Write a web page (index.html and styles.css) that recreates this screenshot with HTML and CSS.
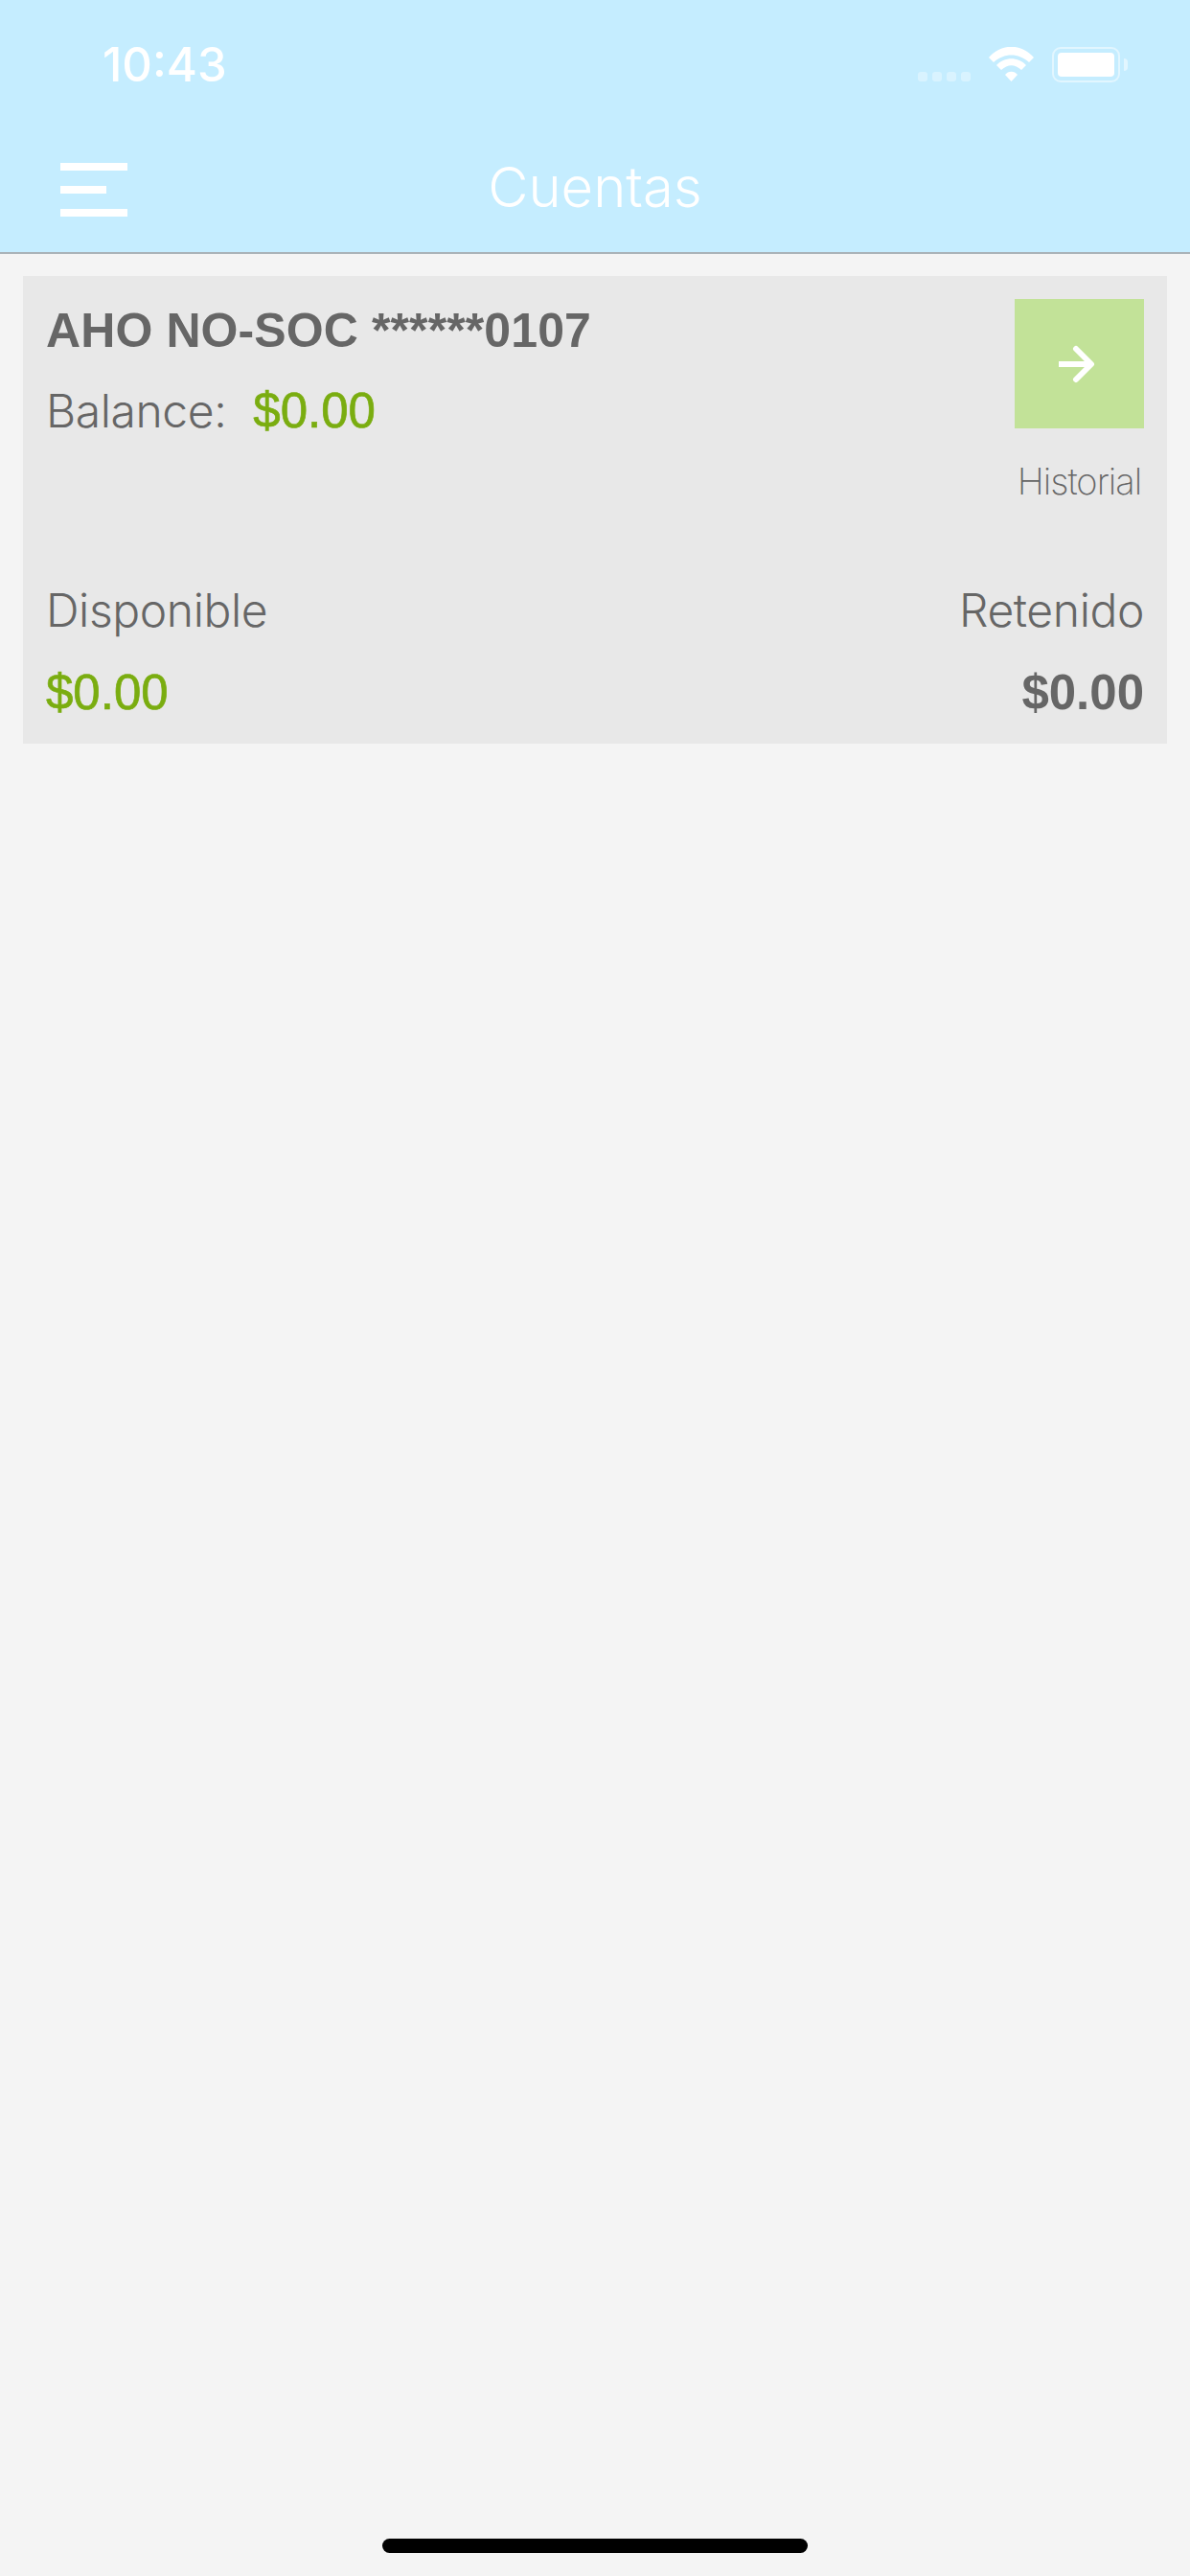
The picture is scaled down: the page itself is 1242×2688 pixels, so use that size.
FILE: index.html
```html
<!DOCTYPE html>
<html lang="es">
<head>
    <meta charset="UTF-8">
    <meta name="viewport" content="width=device-width, initial-scale=1.0">
    <title>Cuentas</title>
    <link rel="stylesheet" href="styles.css">
</head>
<body>
    <header class="top-bar">
        <div class="status-bar">
            <span class="time">10:43</span>
            <div class="status-icons">
                <div class="signal">
                    <span class="dot"></span>
                    <span class="dot"></span>
                    <span class="dot"></span>
                    <span class="dot"></span>
                </div>
                <svg class="wifi" width="47" height="36" viewBox="0 0 47 36">
                    <path d="M0 11 C13 -4 34 -4 47 11 L42 16 C31 6 16 6 5 16 Z" fill="#fff"/>
                    <path d="M8 19 C16 10 31 10 39 19 L34 24 C27 17.500 20 17.500 13 24 Z" fill="#fff"/>
                    <path d="M17 29 C20 24.500 27 24.500 30 29 L23.500 36 Z" fill="#fff"/>
                </svg>
                <div class="battery">
                    <div class="battery-level"></div>
                </div>
                <span class="battery-nub"></span>
            </div>
        </div>
        <nav class="nav-bar">
            <button class="menu-btn" aria-label="Menu">
                <span class="menu-line"></span>
                <span class="menu-line short"></span>
                <span class="menu-line"></span>
            </button>
            <h1 class="nav-title">Cuentas</h1>
        </nav>
    </header>

    <main class="content">
        <section class="account-card">
            <div class="card-top">
                <div class="account-info">
                    <div class="account-name">AHO NO-SOC ******0107</div>
                    <div class="balance-row">
                        <span class="label">Balance:</span>
                        <span class="amount green">$0.00</span>
                    </div>
                </div>
                <div class="history">
                    <a class="history-btn" href="#" aria-label="Historial">
                        <svg class="arrow" width="38" height="40" viewBox="0 0 38 40">
                            <path d="M0 20 H34" fill="none" stroke="#fff" stroke-width="6"/>
                            <path d="M18 4 L34 20 L18 36" fill="none" stroke="#fff" stroke-width="6" stroke-linecap="round" stroke-linejoin="round"/>
                        </svg>
                    </a>
                    <span class="history-label">Historial</span>
                </div>
            </div>
            <div class="card-bottom">
                <div class="col">
                    <span class="label">Disponible</span>
                    <span class="amount green">$0.00</span>
                </div>
                <div class="col right">
                    <span class="label">Retenido</span>
                    <span class="amount bold">$0.00</span>
                </div>
            </div>
        </section>
    </main>

    <div class="home-bar"><span class="home-indicator"></span></div>
</body>
</html>
```

FILE: styles.css
```css
* {
    margin: 0;
    padding: 0;
    box-sizing: border-box;
}

html, body {
    height: 100%;
}

body {
    display: flex;
    flex-direction: column;
    background: #f4f4f4;
    font-family: "Liberation Sans", Arial, sans-serif;
    color: #666;
}

.top-bar {
    height: 265px;
    background: #c5edff;
    border-bottom: 2px solid #a9b3b8;
    color: #fff;
}

.status-bar {
    height: 132px;
    display: flex;
    justify-content: space-between;
    padding: 49px 65px 0 107px;
}

.time {
    font-family: Inter, sans-serif;
    font-weight: 500;
    font-size: 49px;
    line-height: 37px;
}

.status-icons {
    display: flex;
    align-items: flex-start;
}

.signal {
    display: flex;
    gap: 5px;
    margin-top: 26px;
    margin-right: 19px;
}

.dot {
    width: 10px;
    height: 10px;
    border-radius: 3px;
    background: rgba(255, 255, 255, 0.35);
}

.battery {
    width: 71px;
    height: 37px;
    margin-left: 19px;
    padding: 4px;
    border: 2px solid rgba(255, 255, 255, 0.5);
    border-radius: 9px;
}

.battery-level {
    height: 100%;
    background: #fff;
    border-radius: 4px;
}

.battery-nub {
    width: 4px;
    height: 13px;
    margin-top: 12px;
    margin-left: 4px;
    background: rgba(255, 255, 255, 0.5);
    border-radius: 0 6px 6px 0;
}

.nav-bar {
    height: 131px;
    display: flex;
    align-items: center;
    justify-content: center;
    position: relative;
}

.menu-btn {
    position: absolute;
    left: 63px;
    top: 38px;
    width: 70px;
    display: flex;
    flex-direction: column;
    gap: 16px;
    border: 0;
    background: none;
}

.menu-line {
    display: block;
    width: 100%;
    height: 8px;
    background: #fff;
}

.menu-line.short {
    width: 48px;
}

.nav-title {
    font-family: Inter, sans-serif;
    font-weight: 300;
    font-size: 58px;
    margin-top: -6px;
}

.content {
    flex: 1;
    padding: 23px 24px 0;
}

.account-card {
    height: 488px;
    background: #e8e8e8;
    padding: 24px;
    display: flex;
    flex-direction: column;
    justify-content: space-between;
}

.card-top {
    display: flex;
    justify-content: space-between;
}

.account-name {
    font-size: 50px;
    font-weight: bold;
    letter-spacing: 0.100px;
    line-height: 60px;
    margin-top: 3px;
}

.balance-row {
    display: flex;
    gap: 28px;
    margin-top: 24px;
}

.label {
    font-family: Inter, sans-serif;
    font-weight: 300;
    font-size: 48px;
    line-height: 60px;
    letter-spacing: -0.400px;
}

.amount {
    font-size: 51px;
    line-height: 60px;
}

.green {
    color: #7aad10;
    -webkit-text-stroke: 0.700px #7aad10;
}

.bold {
    font-weight: bold;
}

.history {
    display: flex;
    flex-direction: column;
    align-items: center;
}

.history-btn {
    width: 135px;
    height: 135px;
    background: #c2e298;
    display: flex;
    align-items: center;
    justify-content: center;
}

.arrow {
    margin-right: 6px;
}

.history-label {
    font-family: Inter, sans-serif;
    font-weight: 200;
    font-size: 38px;
    letter-spacing: -1px;
    line-height: 46px;
    margin-top: 32px;
    color: #666;
}

.card-bottom {
    display: flex;
    justify-content: space-between;
    margin-bottom: -1px;
}

.col {
    display: flex;
    flex-direction: column;
    gap: 26px;
}

.col.right {
    align-items: flex-end;
}

.home-bar {
    display: flex;
    justify-content: center;
    padding-bottom: 24px;
}

.home-indicator {
    width: 444px;
    height: 15px;
    border-radius: 8px;
    background: #000;
}
```
